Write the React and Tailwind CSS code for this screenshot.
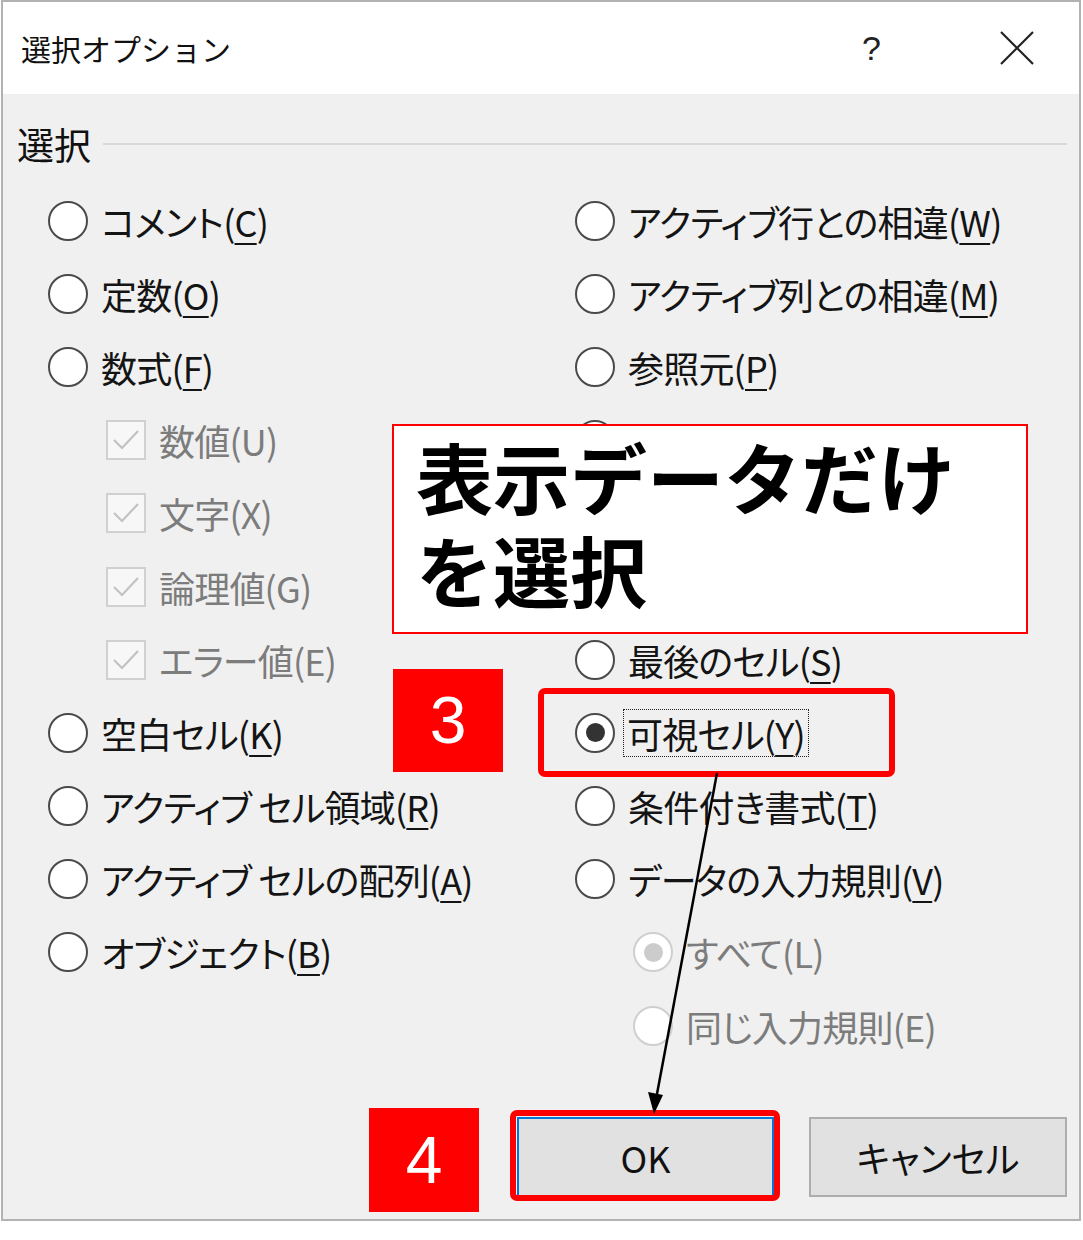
const ui = { fontFamily: '"Noto Sans CJK JP", "Noto Sans", sans-serif' }

function Radio({ checked, disabled }) {
  return (
    <span
      className={`flex h-[40px] w-[40px] shrink-0 items-center justify-center rounded-full border-2 bg-white ${
        disabled ? 'border-[#cfcfcf]' : 'border-[#4a4a4a]'
      }`}
    >
      {checked && (
        <span className={`h-[19px] w-[19px] rounded-full ${disabled ? 'bg-[#cccccc]' : 'bg-[#333333]'}`} />
      )}
    </span>
  )
}

function Check() {
  return (
    <span className="flex h-[40px] w-[40px] shrink-0 items-center justify-center border-2 border-[#d0d0d0] bg-[#f7f7f7]">
      <svg width="32" height="32" viewBox="0 0 32 32" fill="none">
        <path d="M4 16 L12 24 L28 7" stroke="#c2c2c2" strokeWidth="2.2" />
      </svg>
    </span>
  )
}

function Label({ text, k, disabled, focus }) {
  return (
    <span
      className={`whitespace-pre text-[36px] leading-[46px] tracking-[-0.8px] ${disabled ? 'text-[#7c7c7c]' : 'text-[#141414]'} ${
        focus ? '-ml-[4px] px-[3px] outline-1 outline-dotted outline-[#222]' : ''
      }`}
    >
      {text}(
      {disabled ? k : <span className="underline decoration-2 underline-offset-[6px]">{k}</span>})
    </span>
  )
}

function Row({ text, k, kind = 'radio', checked, disabled, indent, focus }) {
  return (
    <div className={`flex h-[73.2px] items-center gap-[13px] ${indent ? 'pl-[58px]' : ''}`}>
      {kind === 'check' ? <Check /> : <Radio checked={checked} disabled={disabled} />}
      <Label text={text} k={k} disabled={disabled} focus={focus} />
    </div>
  )
}

const left = [
  { text: 'コメント', k: 'C' },
  { text: '定数', k: 'O' },
  { text: '数式', k: 'F' },
  { text: '数値', k: 'U', kind: 'check', disabled: true, indent: true },
  { text: '文字', k: 'X', kind: 'check', disabled: true, indent: true },
  { text: '論理値', k: 'G', kind: 'check', disabled: true, indent: true },
  { text: 'エラー値', k: 'E', kind: 'check', disabled: true, indent: true },
  { text: '空白セル', k: 'K' },
  { text: 'アクティブ セル領域', k: 'R' },
  { text: 'アクティブ セルの配列', k: 'A' },
  { text: 'オブジェクト', k: 'B' },
]

const right = [
  { text: 'アクティブ行との相違', k: 'W' },
  { text: 'アクティブ列との相違', k: 'M' },
  { text: '参照元', k: 'P' },
  { text: '参照先', k: 'D' },
  { text: '直接参照のみ', k: 'I', disabled: true, indent: true },
  { text: 'すべてのレベル', k: 'L', disabled: true, indent: true },
  { text: '最後のセル', k: 'S' },
  { text: '可視セル', k: 'Y', checked: true, focus: true },
  { text: '条件付き書式', k: 'T' },
  { text: 'データの入力規則', k: 'V' },
  { text: 'すべて', k: 'L', disabled: true, indent: true, checked: true },
  { text: '同じ入力規則', k: 'E', disabled: true, indent: true },
]

export default function App() {
  return (
    <div className="relative h-[1240px] w-[1083px] overflow-hidden bg-white [font-feature-settings:'palt']" style={ui}>
      <div className="ml-[1px] flex h-[1221px] w-[1080px] flex-col border-2 border-[#b2b2b2]">
        {/* title bar */}
        <div className="flex h-[92px] shrink-0 items-center bg-white pl-[18px] pr-[44px]">
          <span className="text-[30px] text-[#111] [font-feature-settings:normal]">選択オプション</span>
          <span className="ml-auto text-[34px] text-[#222]" style={{ fontFamily: '"Liberation Sans", sans-serif' }}>
            ?
          </span>
          <svg className="ml-[118px]" width="36" height="36" viewBox="0 0 36 36">
            <path d="M2 2 L34 34 M34 2 L2 34" stroke="#222" strokeWidth="2.2" />
          </svg>
        </div>

        {/* body */}
        <div className="flex flex-1 flex-col bg-[#f0f0f0]">
          <div className="flex items-center pl-[14px] pr-[12px] pt-[28px]">
            <span className="text-[37px] leading-[44px] text-[#111]">選択</span>
            <div className="ml-[12px] h-[2px] flex-1 bg-[#d9d9d9]" />
          </div>

          <div className="mt-[18px] flex">
            <div className="flex w-[572px] flex-col pl-[45px]">
              {left.map((r) => (
                <Row key={r.text} {...r} />
              ))}
            </div>
            <div className="flex flex-1 flex-col">
              {right.map((r) => (
                <Row key={r.text} {...r} />
              ))}
            </div>
          </div>

          <div className="mt-auto flex justify-end gap-[35px] pb-[22px] pr-[12px]">
            <button className="flex h-[80px] w-[257px] items-center justify-center border-2 border-[#0078d7] bg-[#e1e1e1] text-[36px] text-[#111]">
              OK
            </button>
            <button className="flex h-[80px] w-[258px] items-center justify-center border-2 border-[#adadad] bg-[#e1e1e1] text-[36px] text-[#111]">
              キャンセル
            </button>
          </div>
        </div>
      </div>

      {/* annotations */}
      <div className="absolute left-[392px] top-[424px] h-[210px] w-[636px] border-2 border-[#ff0000] bg-white pl-[22px] pt-[3px] [font-feature-settings:normal]">
        <p className="text-[77px] font-bold leading-[93px] text-black">
          表示データだけ
          <br />
          を選択
        </p>
      </div>

      <div className="absolute left-[393px] top-[669px] flex h-[103px] w-[110px] items-center justify-center bg-[#ff0000]">
        <span className="text-[66px] font-medium text-white" style={{ fontFamily: '"Liberation Sans", sans-serif' }}>
          3
        </span>
      </div>
      <div className="absolute left-[538px] top-[688px] h-[89px] w-[357px] rounded-[7px] border-[6px] border-[#ff0000]" />

      <div className="absolute left-[369px] top-[1108px] flex h-[104px] w-[110px] items-center justify-center bg-[#ff0000]">
        <span className="text-[66px] font-medium text-white" style={{ fontFamily: '"Liberation Sans", sans-serif' }}>
          4
        </span>
      </div>
      <div className="absolute left-[510px] top-[1110px] h-[91px] w-[270px] rounded-[7px] border-[6px] border-[#ff0000]" />

      <svg className="pointer-events-none absolute left-0 top-0" width="1083" height="1240">
        <line x1="717" y1="773" x2="657" y2="1094" stroke="#000" strokeWidth="2.5" />
        <path d="M654 1114 L648 1092 L663 1095 Z" fill="#000" />
      </svg>
    </div>
  )
}
